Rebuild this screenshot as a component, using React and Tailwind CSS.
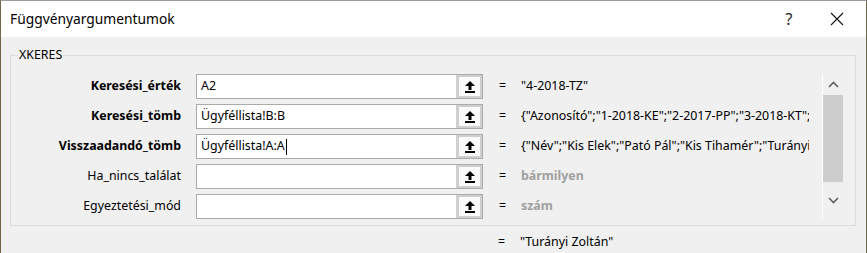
const rows = [
  { label: 'Keresési_érték', bold: true, input: 'A2', value: '"4-2018-TZ"' },
  { label: 'Keresési_tömb', bold: true, input: 'Ügyféllista!B:B', value: '{"Azonosító";"1-2018-KE";"2-2017-PP";"3-2018-KT";"4-2018-TZ"}' },
  { label: 'Visszaadandó_tömb', bold: true, input: 'Ügyféllista!A:A', value: '{"Név";"Kis Elek";"Pató Pál";"Kis Tihamér";"Turányi Zoltán"}', caret: true },
  { label: 'Ha_nincs_találat', bold: false, input: '', value: 'bármilyen', hint: true },
  { label: 'Egyeztetési_mód', bold: false, input: '', value: 'szám', hint: true },
];

function CollapseIcon() {
  return (
    <svg width="12" height="14" viewBox="0 0 12 14">
      <polygon points="6,1 11,6 1,6" fill="#000" />
      <rect x="4.5" y="5" width="3" height="5" fill="#000" />
      <rect x="1" y="11" width="10" height="2" fill="#000" />
    </svg>
  );
}

function Chevron({ down }) {
  return (
    <svg width="11" height="7" viewBox="0 0 11 7">
      <polyline
        points={down ? '1,1 5.5,5.5 10,1' : '1,6 5.5,1.5 10,6'}
        fill="none"
        stroke="#606060"
        strokeWidth="1.6"
      />
    </svg>
  );
}

function ArgRow({ row }) {
  return (
    <div className="flex items-center h-[25px]">
      <div className={`w-[170px] text-right text-[12.4px] text-[#000] ${row.bold ? 'font-bold' : ''}`}>
        {row.label}
      </div>
      <div className="ml-[15px] flex h-[25px] w-[287px] border border-[#ababab] bg-white">
        <div className="flex-1 flex items-center px-[4px] text-[12.4px] text-black whitespace-nowrap">
          {row.input}
          {row.caret && <span className="inline-block w-px h-[16px] bg-black ml-px" />}
        </div>
        <div className="w-[26px] h-full border-l border-[#d0d0d0] bg-[#cfcfcf] p-[2px]">
          <div className="w-full h-full bg-[#fafafa] flex items-center justify-center">
            <CollapseIcon />
          </div>
        </div>
      </div>
      <div className="ml-[16px] w-[22px] text-[12.4px] text-black">=</div>
      <div
        className={`w-[288px] overflow-hidden whitespace-nowrap text-[12.4px] ${
          row.hint ? 'font-bold text-[#a0a0a0]' : 'text-black'
        }`}
      >
        {row.value}
      </div>
    </div>
  );
}

export default function App() {
  return (
    <div
      className="w-[867px] h-[253px] overflow-hidden bg-[#f0f0f0] border-x border-[#6f6648] border-t border-t-[#9a9a9a]"
      style={{ fontFamily: '"Noto Sans", "Open Sans", sans-serif' }}
    >
      <div className="h-[36px] bg-white flex items-center pl-[9px]">
        <div className="flex-1 text-[13.8px] text-black">Függvényargumentumok</div>
        <div className="w-[46px] text-center text-[16px] text-[#222] mr-[2px]">?</div>
        <div className="w-[46px] flex justify-center mr-[6px]">
          <svg width="14" height="14" viewBox="0 0 14 14">
            <path d="M1 1 L13 13 M13 1 L1 13" stroke="#111" strokeWidth="1.1" />
          </svg>
        </div>
      </div>

      <fieldset className="mx-[9px] mt-[11px] w-[846px] h-[178px] border border-[#dcdcdc] px-0 pt-0 pb-0 relative">
        <legend className="ml-[7px] px-[1px] text-[12.4px] text-black leading-[14px]">XKERES</legend>
        <div className="flex mt-[12px]">
          <div className="flex flex-col gap-[5px]">
            {rows.map((row) => (
              <ArgRow key={row.label} row={row} />
            ))}
          </div>
          <div className="ml-[13px] w-[21px] h-[145px] border-l border-white flex flex-col">
            <div className="h-[21px] flex items-center justify-center">
              <Chevron />
            </div>
            <div className="h-[87px] bg-[#cdcdcd]" />
            <div className="flex-1 flex items-center justify-center">
              <Chevron down />
            </div>
          </div>
        </div>
      </fieldset>

      <div className="flex items-center h-[30px] mt-[1px]">
        <div className="ml-[497px] w-[22px] text-[12.4px] text-black">=</div>
        <div className="text-[12.4px] text-black">"Turányi Zoltán"</div>
      </div>
    </div>
  );
}
